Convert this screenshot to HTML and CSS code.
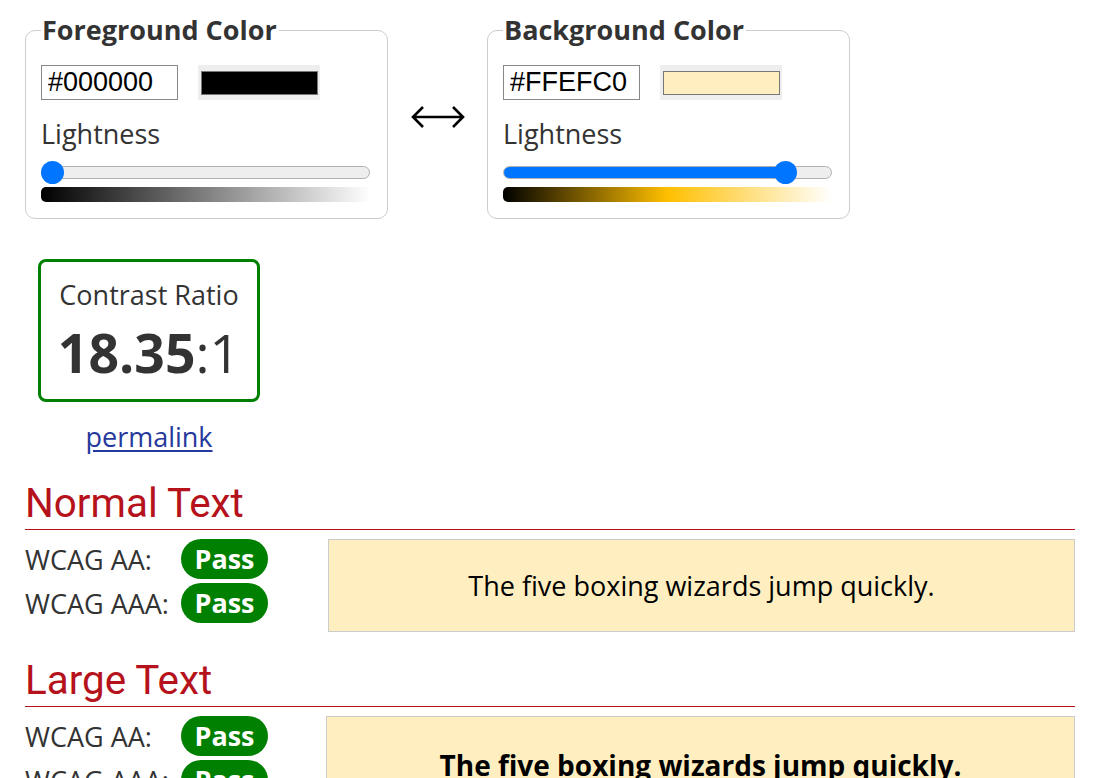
FILE: index.html
```html
<!DOCTYPE html>
<html lang="en">
<head>
<meta charset="utf-8">
<title>Contrast Checker</title>
<link rel="stylesheet" href="styles.css">
</head>
<body>
<main class="page">
  <div class="pickers">
    <fieldset class="picker">
      <legend class="picker-title">Foreground Color</legend>
      <div class="color-row">
        <input class="hex" type="text" value="#000000" aria-label="Foreground hex">
        <span class="swatch"><span class="swatch-fill swatch-fg"></span></span>
      </div>
      <div class="picker-label">Lightness</div>
      <div class="slider">
        <div class="track"></div>
        <div class="thumb thumb-fg"></div>
      </div>
      <div class="gradient gradient-fg"></div>
    </fieldset>

    <div class="swap" aria-label="Swap colors">
      <svg class="swap-icon" width="54" height="24" viewBox="0 0 54 24" aria-hidden="true">
        <path d="M2 12 H52 M12 2 L2 12 L12 22 M42 2 L52 12 L42 22" fill="none" stroke="#000" stroke-width="2.6" stroke-linecap="butt" stroke-linejoin="miter"/>
      </svg>
    </div>

    <fieldset class="picker">
      <legend class="picker-title">Background Color</legend>
      <div class="color-row">
        <input class="hex" type="text" value="#FFEFC0" aria-label="Background hex">
        <span class="swatch"><span class="swatch-fill swatch-bg"></span></span>
      </div>
      <div class="picker-label">Lightness</div>
      <div class="slider">
        <div class="track"><div class="track-fill" style="width:283px"></div></div>
        <div class="thumb" style="left:271px"></div>
      </div>
      <div class="gradient gradient-bg"></div>
    </fieldset>
  </div>

  <div class="result">
    <div class="ratio-box">
      <div class="ratio-label">Contrast Ratio</div>
      <div class="ratio-value"><b>18.35</b>:1</div>
    </div>
    <a class="permalink" href="#">permalink</a>
  </div>

  <section class="test">
    <h2 class="test-title">Normal Text</h2>
    <div class="test-body">
      <div class="checks">
        <div class="check"><span class="check-label">WCAG AA:</span><span class="badge">Pass</span></div>
        <div class="check"><span class="check-label">WCAG AAA:</span><span class="badge">Pass</span></div>
      </div>
      <div class="sample">The five boxing wizards jump quickly.</div>
    </div>
  </section>

  <section class="test test-large">
    <h2 class="test-title">Large Text</h2>
    <div class="test-body">
      <div class="checks">
        <div class="check"><span class="check-label">WCAG AA:</span><span class="badge">Pass</span></div>
        <div class="check"><span class="check-label">WCAG AAA:</span><span class="badge">Pass</span></div>
      </div>
      <div class="sample sample-large">The five boxing wizards jump quickly.</div>
    </div>
  </section>
</main>
</body>
</html>
```

FILE: styles.css
```css
html, body {
  margin: 0;
  padding: 0;
  background: #fff;
}

body {
  font-family: "Open Sans", "Noto Sans", sans-serif;
  font-size: 27px;
  color: #333;
}

.page {
  padding: 15px 21px 0 25px;
}

/* ---------- color pickers ---------- */
.pickers {
  display: flex;
  align-items: center;
}

.picker {
  width: 363px;
  box-sizing: border-box;
  margin: 0;
  min-width: 0;
  border: 1px solid #ccc;
  border-radius: 10px;
  padding: 20px 17px 16px 15px;
}

.picker-title {
  font-weight: 700;
  font-size: 27px;
  line-height: 30px;
  padding: 0 2px 0 1px;
  color: #333;
}

.color-row {
  display: flex;
  align-items: center;
  gap: 20px;
}

.hex {
  box-sizing: border-box;
  width: 137px;
  height: 35px;
  margin: 0;
  padding: 0 6px;
  border: 1px solid #888;
  border-radius: 0;
  font-family: "Liberation Sans", Arial, sans-serif;
  font-size: 27px;
  color: #000;
  background: #fff;
}

.swatch {
  display: flex;
  box-sizing: border-box;
  width: 122px;
  height: 35px;
  padding: 6px 2px 5px 3px;
  background: #eee;
}

.swatch-fill {
  flex: 1;
  border: 1px solid #777;
}

.swatch-fg { background: #000; }
.swatch-bg { background: #FFEFC0; }

.picker-label {
  margin-top: 15px;
  line-height: 37px;
}

.slider {
  position: relative;
  height: 23px;
  margin-top: 9px;
}

.track {
  position: absolute;
  left: 0;
  right: 0;
  top: 5px;
  height: 13px;
  box-sizing: border-box;
  border: 1px solid #b0b0b0;
  border-radius: 7px;
  background: #eee;
  overflow: hidden;
}

.track-fill {
  height: 100%;
  background: #0075ff;
}

.thumb {
  position: absolute;
  top: 0;
  left: 0;
  width: 23px;
  height: 23px;
  border-radius: 50%;
  background: #0075ff;
}

.gradient {
  height: 15px;
  margin-top: 3px;
  border-radius: 5px 0 0 5px;
}

.gradient-fg {
  background: linear-gradient(to right, #000, #fff);
}

.gradient-bg {
  background: linear-gradient(to right, #000, #FFBF00 50%, #fff);
}

.swap {
  width: 99px;
  display: flex;
  justify-content: center;
  align-items: center;
}

.swap-icon {
  display: block;
}

/* ---------- result ---------- */
.result {
  width: 222px;
  margin: 40px 0 0 13px;
  text-align: center;
}

.ratio-box {
  box-sizing: border-box;
  height: 143px;
  border: 3px solid #008000;
  border-radius: 8px;
  padding-top: 15px;
}

.ratio-label {
  line-height: 36px;
}

.ratio-value {
  margin-top: 13px;
  font-size: 53.5px;
  line-height: 53px;
}

.ratio-value b {
  font-weight: 700;
}

.permalink {
  display: inline-block;
  margin-top: 17px;
  line-height: 36px;
  color: #26399c;
  text-decoration: underline;
  text-underline-offset: 3px;
}

/* ---------- test sections ---------- */
.test {
  margin-top: 25px;
}

.test-large {
  margin-top: 25px;
}

.test-title {
  margin: 0;
  padding-bottom: 1px;
  font-family: Roboto, "Liberation Sans", sans-serif;
  font-weight: 400;
  font-size: 40.4px;
  line-height: 48px;
  color: #b5121b;
  border-bottom: 1px solid #b5121b;
}

.test-body {
  display: flex;
  align-items: flex-start;
  margin-top: 9px;
}

.checks {
  width: 303px;
  flex: none;
  display: flex;
  flex-direction: column;
  gap: 4px;
}

.check {
  display: flex;
  align-items: center;
  height: 40px;
}

.check-label {
  width: 156px;
}

.badge {
  box-sizing: border-box;
  width: 87px;
  height: 40px;
  border-radius: 20px;
  background: #008000;
  color: #fff;
  font-weight: 700;
  line-height: 40px;
  text-align: center;
}

.sample {
  flex: 1;
  box-sizing: border-box;
  height: 93px;
  border: 1px solid #ccc;
  background: #FFEFC0;
  color: #000;
  display: flex;
  align-items: center;
  justify-content: center;
}

.test-large .checks {
  width: 301px;
}

.sample-large {
  height: 98px;
  font-weight: 700;
  font-size: 28px;
}
```
